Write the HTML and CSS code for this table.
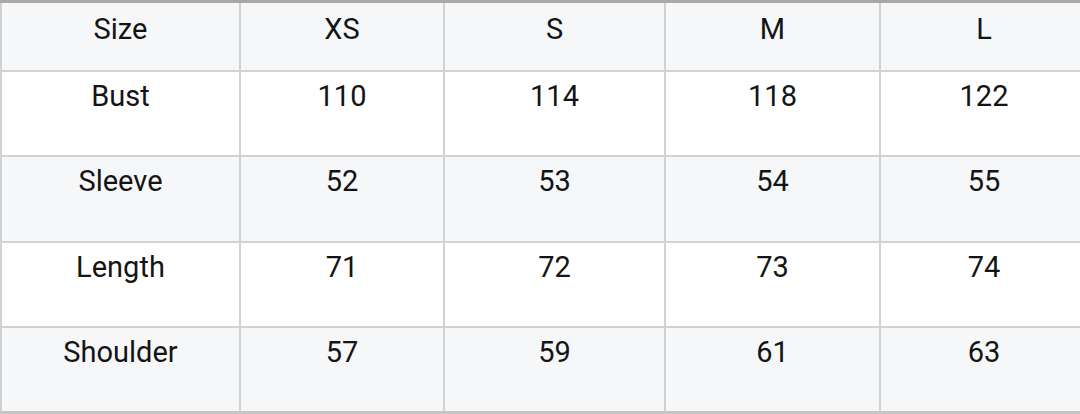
FILE: index.html
```html
<!DOCTYPE html>
<html>
<head>
<meta charset="utf-8">
<link rel="stylesheet" href="styles.css">
</head>
<body>
<div class="chart">
  <div class="cell alt head">Size</div><div class="cell alt head">XS</div><div class="cell alt head">S</div><div class="cell alt head">M</div><div class="cell alt head">L</div>
  <div class="cell">Bust</div><div class="cell">110</div><div class="cell">114</div><div class="cell">118</div><div class="cell">122</div>
  <div class="cell alt">Sleeve</div><div class="cell alt">52</div><div class="cell alt">53</div><div class="cell alt">54</div><div class="cell alt">55</div>
  <div class="cell">Length</div><div class="cell">71</div><div class="cell">72</div><div class="cell">73</div><div class="cell">74</div>
  <div class="cell alt">Shoulder</div><div class="cell alt">57</div><div class="cell alt">59</div><div class="cell alt">61</div><div class="cell alt">63</div>
</div>
</body>
</html>
```
FILE: styles.css
```css
html, body {
  margin: 0;
  padding: 0;
  background: #ffffff;
  overflow: hidden;
}
.chart {
  display: grid;
  grid-template-columns: 237px 202px 219px 213px 206px;
  grid-template-rows: 67px 83px 84px 83px 83px;
  gap: 2px;
  padding-left: 2px;
  background: #d2d2d2;
  border-top: 3px solid #a9a9a9;
  border-bottom: 3px solid #c6c6c6;
  width: 1085px;
  font-family: Roboto, "Liberation Sans", sans-serif;
  font-size: 29px;
  color: #141414;
}
.cell {
  background: #ffffff;
  text-align: center;
  padding-top: 7px;
  line-height: 34px;
}
.head {
  padding-top: 9px;
}
.alt {
  background: #f6f7f9;
}
```
